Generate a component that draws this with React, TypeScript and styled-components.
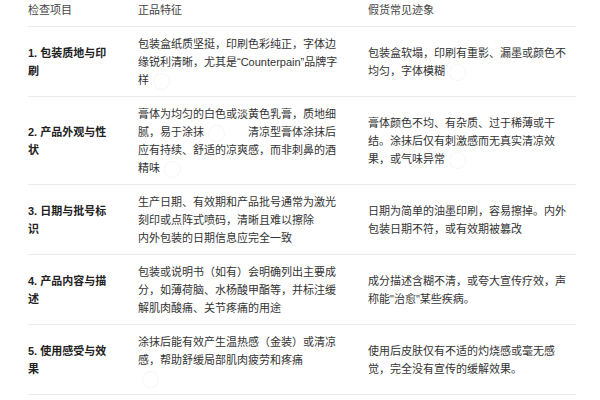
import React from "react";
import styled, { createGlobalStyle } from "styled-components";

const Global = createGlobalStyle`
  html, body { margin: 0; padding: 0; background: #ffffff; }
  body {
    font-family: "Liberation Sans", "Noto Sans CJK SC", sans-serif;
    -webkit-font-smoothing: antialiased;
  }
`;

const Page = styled.div`
  padding: 0 24px 0 28px;
`;

const Table = styled.table`
  width: 548px;
  border-collapse: collapse;
  table-layout: fixed;
  font-size: 11px;
  line-height: 18px;
  color: #333333;
`;

const Col = styled.col<{ $w: number }>`
  width: ${(p) => p.$w}px;
`;

const Th = styled.th<{ $pr: number }>`
  text-align: left;
  font-weight: 400;
  color: #444444;
  padding: 1px ${(p) => p.$pr}px 7px 0;
  border-bottom: 1px solid #e9e9e9;
`;

const Td = styled.td<{ $pr: number; $bold?: boolean }>`
  vertical-align: middle;
  padding: 8px ${(p) => p.$pr}px 7px 0;
  border-bottom: 1px solid #ebebeb;
  font-weight: ${(p) => (p.$bold ? 700 : 400)};
  color: ${(p) => (p.$bold ? "#222222" : "#333333")};
  word-break: break-all;
`;

const Cite = styled.span`
  display: inline-block;
  width: 44px;
  height: 14px;
  vertical-align: middle;
  position: relative;
  &::before {
    content: "";
    position: absolute;
    left: 4px;
    top: -1px;
    width: 15px;
    height: 15px;
    border-radius: 50%;
    border: 1px solid #f6f6f6;
  }
`;

type Row = { name: string; real: React.ReactNode; fake: React.ReactNode };

const rows: Row[] = [
  {
    name: "1. 包装质地与印刷",
    real: (
      <>
        包装盒纸质坚挺，印刷色彩纯正，字体边缘锐利清晰，尤其是“Counterpain”品牌字样
        <Cite />
      </>
    ),
    fake: (
      <>
        包装盒软塌，印刷有重影、漏墨或颜色不均匀，字体模糊
        <Cite />
      </>
    ),
  },
  {
    name: "2. 产品外观与性状",
    real: (
      <>
        膏体为均匀的白色或淡黄色乳膏，质地细腻，易于涂抹
        <Cite />
        清凉型膏体涂抹后应有持续、舒适的凉爽感，而非刺鼻的酒精味
        <Cite />
      </>
    ),
    fake: (
      <>
        膏体颜色不均、有杂质、过于稀薄或干结。涂抹后仅有刺激感而无真实清凉效果，或气味异常
        <Cite />
      </>
    ),
  },
  {
    name: "3. 日期与批号标识",
    real: (
      <>
        生产日期、有效期和产品批号通常为激光刻印或点阵式喷码，清晰且难以擦除
        <br />
        内外包装的日期信息应完全一致
      </>
    ),
    fake: <>日期为简单的油墨印刷，容易擦掉。内外包装日期不符，或有效期被篡改</>,
  },
  {
    name: "4. 产品内容与描述",
    real: (
      <>
        包装或说明书（如有）会明确列出主要成分，如薄荷脑、水杨酸甲酯等，并标注缓解肌肉酸痛、关节疼痛的用途
      </>
    ),
    fake: <>成分描述含糊不清，或夸大宣传疗效，声称能"治愈"某些疾病。</>,
  },
  {
    name: "5. 使用感受与效果",
    real: (
      <>
        涂抹后能有效产生温热感（金装）或清凉感，帮助舒缓局部肌肉疲劳和疼痛
        <Cite />
      </>
    ),
    fake: <>使用后皮肤仅有不适的灼烧感或毫无感觉，完全没有宣传的缓解效果。</>,
  },
];

export default function App() {
  return (
    <>
      <Global />
      <Page>
        <Table>
          <colgroup>
            <Col $w={110} />
            <Col $w={230} />
            <Col $w={208} />
          </colgroup>
          <thead>
            <tr>
              <Th $pr={24}>检查项目</Th>
              <Th $pr={24}>正品特征</Th>
              <Th $pr={4}>假货常见迹象</Th>
            </tr>
          </thead>
          <tbody>
            {rows.map((r) => (
              <tr key={r.name}>
                <Td $pr={24} $bold>
                  {r.name}
                </Td>
                <Td $pr={24}>{r.real}</Td>
                <Td $pr={4}>{r.fake}</Td>
              </tr>
            ))}
          </tbody>
        </Table>
      </Page>
    </>
  );
}
